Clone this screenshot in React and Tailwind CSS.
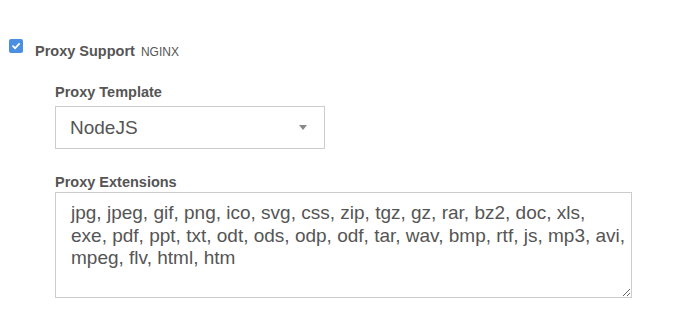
import { useState } from 'react'

const extensions =
  'jpg, jpeg, gif, png, ico, svg, css, zip, tgz, gz, rar, bz2, doc, xls,\nexe, pdf, ppt, txt, odt, ods, odp, odf, tar, wav, bmp, rtf, js, mp3, avi,\nmpeg, flv, html, htm'

function Checkbox({ checked, onChange }) {
  return (
    <button
      type="button"
      onClick={() => onChange(!checked)}
      className={`flex h-[14px] w-[14px] flex-none items-center justify-center rounded-[2px] ${checked ? 'bg-[#4a8fe0]' : 'border border-[#bbb] bg-white'}`}
    >
      {checked && (
        <svg viewBox="0 0 12 12" className="h-[10px] w-[10px]">
          <path d="M2.4 6.2 L5 8.7 L9.7 3.5" fill="none" stroke="white" strokeWidth="2.2" strokeLinecap="round" strokeLinejoin="round" />
        </svg>
      )}
    </button>
  )
}

function Label({ children }) {
  return <div className="text-[14.5px] font-bold leading-[20px] text-[#555]">{children}</div>
}

export default function App() {
  const [proxy, setProxy] = useState(true)

  return (
    <div className="min-h-[336px] bg-white pt-[39px] font-['Liberation_Sans',Arial,sans-serif] text-[#555]">
      <div className="flex items-start pl-[9px]">
        <Checkbox checked={proxy} onChange={setProxy} />
        <div className="ml-[12px] mt-[2px] flex items-baseline gap-[6px]">
          <span className="text-[14.5px] font-bold leading-[20px]">Proxy Support</span>
          <span className="text-[12px] leading-[20px]">NGINX</span>
        </div>
      </div>

      <div className="ml-[55px]">
        <div className="mt-[20px]">
          <Label>Proxy Template</Label>
          <div className="mt-[4px] flex h-[43px] w-[270px] items-center justify-between border border-[#ccc] bg-white pl-[14px] pr-[17px]">
            <span className="text-[19px] leading-[22px]">NodeJS</span>
            <span className="h-0 w-0 border-x-[4.5px] border-t-[5px] border-x-transparent border-t-[#888]" />
          </div>
        </div>

        <div className="mt-[23px]">
          <Label>Proxy Extensions</Label>
          <textarea
            readOnly
            defaultValue={extensions}
            className="block h-[106px] w-[577px] resize-y border border-[#ccc] bg-white pl-[15px] pr-0 pt-[9px] text-[19px] leading-[22.5px] text-[#555] outline-none"
          />
        </div>
      </div>
    </div>
  )
}
